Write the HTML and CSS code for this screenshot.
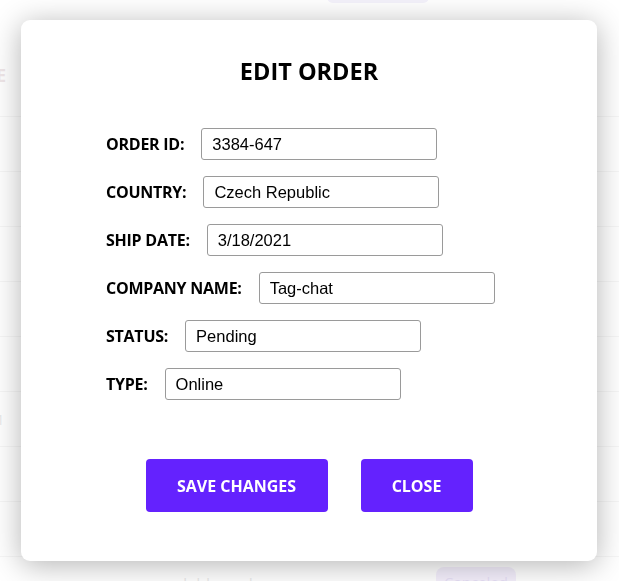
FILE: index.html
```html
<!DOCTYPE html>
<html>
<head>
<meta charset="utf-8">
<link rel="stylesheet" href="styles.css">
</head>
<body>
<div class="page">
  <div class="top-pill"></div>
  <div class="table">
    <div class="row head"><span class="c1 c1-head">E</span></div>
    <div class="row"></div>
    <div class="row"></div>
    <div class="row"></div>
    <div class="row"></div>
    <div class="row"></div>
    <div class="row"><span class="c1">1</span></div>
    <div class="row"></div>
    <div class="row"></div>
    <div class="row last"><span class="c2">Jabbercube</span><span class="pill">Canceled</span></div>
  </div>
</div>
<div class="overlay"></div>
<div class="modal">
  <h1 class="title">EDIT ORDER</h1>
  <form class="form">
    <div class="field"><label>ORDER ID:</label><input type="text" value="3384-647"></div>
    <div class="field"><label>COUNTRY:</label><input type="text" value="Czech Republic"></div>
    <div class="field"><label>SHIP DATE:</label><input type="text" value="3/18/2021"></div>
    <div class="field"><label>COMPANY NAME:</label><input type="text" value="Tag-chat"></div>
    <div class="field"><label>STATUS:</label><input type="text" value="Pending"></div>
    <div class="field"><label>TYPE:</label><input type="text" value="Online"></div>
  </form>
  <div class="actions">
    <button class="btn save">SAVE CHANGES</button>
    <button class="btn close">CLOSE</button>
  </div>
</div>
</body>
</html>
```
FILE: styles.css
```css
html, body {
  margin: 0;
  padding: 0;
  width: 619px;
  height: 581px;
  overflow: hidden;
  background: #ffffff;
  font-family: "Open Sans", "Noto Sans", sans-serif;
}
.page {
  position: relative;
  width: 619px;
  height: 581px;
  overflow: hidden;
}
.top-pill {
  position: absolute;
  left: 327px;
  top: -12px;
  width: 102px;
  height: 15px;
  border-radius: 6px;
  background: #e6e1f7;
}
.table {
  display: flex;
  flex-direction: column;
  padding-top: 62px;
}
.row {
  height: 54px;
  border-bottom: 1px solid #ebebeb;
  display: flex;
  align-items: center;
  position: relative;
  font-size: 15px;
  color: #cfcfcf;
}
.row.head {
  color: #dcc9cc;
  font-weight: 700;
  font-size: 18px;
}
.c1 {
  position: absolute;
  left: -4px;
}
.c1-head {
  top: 1px;
}
.c2 {
  position: absolute;
  left: 183px;
  top: 16px;
  font-size: 16px;
}
.pill {
  position: absolute;
  left: 436px;
  top: 10px;
  width: 80px;
  height: 30px;
  border-radius: 8px;
  background: #e7dcf9;
  color: #c9b8ea;
  font-size: 15px;
  text-align: center;
  line-height: 30px;
}
.overlay {
  position: fixed;
  inset: 0;
  background: rgba(255, 255, 255, 0.55);
}
.modal {
  position: fixed;
  left: 21px;
  top: 20px;
  width: 576px;
  height: 541px;
  box-sizing: border-box;
  background: #ffffff;
  border-radius: 9px;
  box-shadow: 0 4px 30px rgba(0, 0, 0, 0.3);
  padding: 35px 0 0 85px;
  display: flex;
  flex-direction: column;
}
.title {
  margin: 0 85px 0 0;
  text-align: center;
  font-size: 23.5px;
  font-weight: 700;
  line-height: 32px;
  color: #000;
}
.form {
  display: flex;
  flex-direction: column;
  gap: 16px;
  margin-top: 41px;
}
.field {
  display: flex;
  align-items: center;
  gap: 17px;
  height: 32px;
}
.field label {
  font-size: 16px;
  font-weight: 700;
  color: #000;
  letter-spacing: -0.25px;
}
.field input {
  width: 236px;
  height: 32px;
  box-sizing: border-box;
  border: 1px solid #9a9a9a;
  border-radius: 3px;
  padding: 0 10px;
  font-family: "Liberation Sans", Arial, sans-serif;
  font-size: 16.5px;
  color: #000;
  background: #fff;
}
.actions {
  display: flex;
  justify-content: center;
  gap: 33px;
  margin: 59px 85px 0 0;
}
.btn {
  height: 53px;
  border: none;
  border-radius: 4px;
  background: #6422fe;
  color: #fff;
  font-family: "Open Sans", "Noto Sans", sans-serif;
  font-size: 16px;
  font-weight: 700;
}
.save { width: 182px; }
.close { width: 112px; }
```
